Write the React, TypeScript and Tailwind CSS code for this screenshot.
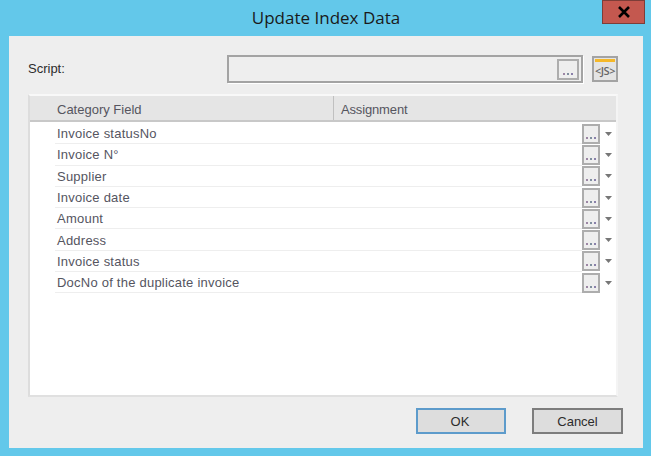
const fields = [
  'Invoice statusNo',
  'Invoice N°',
  'Supplier',
  'Invoice date',
  'Amount',
  'Address',
  'Invoice status',
  'DocNo of the duplicate invoice',
];

function DotsButton({ className }: { className: string }) {
  return (
    <div className={`flex items-end justify-center border-2 border-[#adadad] bg-[#eeeeee] pb-[3px] ${className}`}>
      <div className="flex gap-[2px]">
        <span className="h-[2px] w-[2px] bg-[#9c86a4]" />
        <span className="h-[2px] w-[2px] bg-[#7f8f9f]" />
        <span className="h-[2px] w-[2px] bg-[#8a80aa]" />
      </div>
    </div>
  );
}

function Row({ label }: { label: string }) {
  return (
    <div className="flex h-[21.3px] shrink-0 items-center pl-[25px]">
      <div className="flex h-full flex-1 items-center border-b border-[#eeeeee] pl-[2px] pt-[1px] tracking-[0.23px] text-[#55555f]">{label}</div>
      <DotsButton className="h-[20px] w-[18px] shrink-0" />
      <div className="flex w-[16px] shrink-0 justify-center">
        <svg width="7" height="4" viewBox="0 0 7 4">
          <path d="M0 0h7L3.5 4z" fill="#777777" />
        </svg>
      </div>
    </div>
  );
}

export default function App() {
  return (
    <div className="flex h-[456px] w-[651px] flex-col overflow-hidden bg-[#63c8ea] font-['Liberation_Sans',sans-serif] text-[13px] leading-none">
      <div className="flex h-[36px] shrink-0 items-start">
        <div className="flex h-full flex-1 items-center justify-center pb-[2px] pl-[50px] font-['Open_Sans',sans-serif] text-[17px] text-[#1a1a1a]">
          Update Index Data
        </div>
        <div className="mr-[6px] flex h-[24px] w-[43px] items-center justify-center border border-[#7d3d38] bg-[#c4584f]">
          <svg width="14" height="12" viewBox="0 0 14 12">
            <path d="M2 1l10 10M12 1L2 11" stroke="#000000" strokeWidth="2.6" fill="none" />
          </svg>
        </div>
      </div>
      <div className="ml-[9px] mr-[8px] flex h-[412px] flex-col bg-[#eeeeee] pb-[14px] pl-[19px] pr-[25px] pt-[19px]">
        <div className="flex h-[28px] shrink-0 items-center">
          <div className="w-[199px] pb-[1px] text-[#2c2c2c]">Script:</div>
          <div className="flex h-[28px] w-[356px] items-center justify-end border-2 border-[#a3a3a3] bg-[#eeeeee] pr-[2px] shadow-[1px_1px_0_#ffffff]">
            <DotsButton className="h-[21px] w-[22px]" />
          </div>
          <div className="ml-[9px] flex h-[26px] w-[26px] flex-col items-center border-2 border-[#a3a3a3] bg-[#e4e4e4] pt-[1px]">
            <div className="h-[3px] w-[20px] bg-[#f5b829]" />
            <div className="mt-[3px] font-['Open_Sans',sans-serif] text-[11px] font-semibold tracking-[-0.5px] text-[#666666]">&lt;JS&gt;</div>
          </div>
        </div>
        <div className="mt-[11px] flex h-[303px] shrink-0 flex-col border-2 border-b-[#e0e0e0] border-l-[#dddddd] border-r-[#f4f4f4] border-t-[#f8f8f8] bg-white">
          <div className="flex h-[26px] shrink-0 border-b-2 border-[#c8c8c8] bg-[#e5e5e5] text-[#55555f]">
            <div className="flex w-[304px] items-center border-r border-[#c0c0c0] pl-[27px] pt-[3px]">Category Field</div>
            <div className="flex flex-1 items-center pl-[7px] pt-[3px] tracking-[-0.15px]">Assignment</div>
          </div>
          <div className="flex flex-col pt-[1px]">
            {fields.map((f) => (
              <Row key={f} label={f} />
            ))}
          </div>
        </div>
        <div className="mr-[-5px] mt-[11px] flex justify-end gap-[26px]">
          <button className="flex h-[26px] w-[90px] items-center justify-center border-2 border-[#5d9bcb] bg-[#dddddd] pr-[2px] text-[#2c2c2c]">
            OK
          </button>
          <button className="flex h-[26px] w-[91px] items-center justify-center border-2 border-[#7d7d7d] bg-[#dddddd] text-[#2c2c2c]">
            Cancel
          </button>
        </div>
      </div>
    </div>
  );
}
